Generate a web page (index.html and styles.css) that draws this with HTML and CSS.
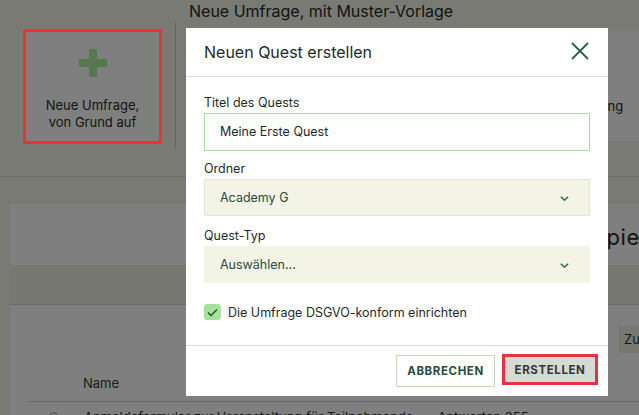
FILE: index.html
```html
<!DOCTYPE html>
<html lang="de">
<head>
<meta charset="utf-8">
<title>Neuen Quest erstellen</title>
<link rel="stylesheet" href="styles.css">
</head>
<body>
<div class="page">
  <section class="creator">
    <div class="creator-col creator-col--blank">
      <button class="create-card" type="button">
        <svg class="create-card__plus" width="28" height="28" viewBox="0 0 28 28" aria-hidden="true">
          <rect x="10" y="0" width="8" height="28" fill="#a6f29a"/>
          <rect x="0" y="10" width="28" height="8" fill="#a6f29a"/>
        </svg>
        <span class="create-card__label">Neue Umfrage,<br>von Grund auf</span>
      </button>
    </div>
    <div class="creator-sep"></div>
    <div class="creator-col creator-col--templates">
      <h2 class="creator-title">Neue Umfrage, mit Muster-Vorlage</h2>
      <div class="template-row">
        <div class="template-card"><span>Mitarbeiterbefragung</span></div>
        <div class="template-card"><span>Kundenzufriedenheit</span></div>
        <div class="template-card template-card--wide"><span>Veranstaltung</span></div>
      </div>
    </div>
  </section>

  <section class="quests">
    <h2 class="quests-title">Meine Quests und Beispiele</h2>
    <div class="quests-toolbar"></div>
    <div class="quests-actions">
      <span class="quests-reset">Zurücksetzen</span>
    </div>
    <div class="quests-table">
      <div class="quests-head"><span class="col-name">Name</span></div>
      <div class="quests-row">
        <span class="row-icon">&#9737;</span>
        <span class="row-name">Anmeldeformular zur Veranstaltung für Teilnehmende</span>
        <span class="row-count">Antworten 255</span>
      </div>
    </div>
  </section>
</div>

<div class="backdrop"></div>
<div class="hint hint--card"></div>

<div class="modal" role="dialog" aria-labelledby="modal-title">
  <header class="modal-head">
    <h1 id="modal-title" class="modal-title">Neuen Quest erstellen</h1>
    <button class="modal-close" type="button" aria-label="Schließen">
      <svg width="18" height="18" viewBox="0 0 18 18" aria-hidden="true">
        <path d="M1 1 L17 17 M17 1 L1 17" stroke="#2d5d4f" stroke-width="1.8" fill="none"/>
      </svg>
    </button>
  </header>
  <div class="modal-body">
    <label class="field-label" for="q-title">Titel des Quests</label>
    <div class="field-input" id="q-title">Meine Erste Quest</div>

    <label class="field-label">Ordner</label>
    <div class="field-select field-select--bordered">
      <span>Academy G</span>
      <svg class="chevron" width="9" height="5" viewBox="0 0 9 5" aria-hidden="true"><path d="M0.8 0.8 L4.5 4.2 L8.2 0.8" stroke="#2d5d4f" stroke-width="1.4" fill="none"/></svg>
    </div>

    <label class="field-label">Quest-Typ</label>
    <div class="field-select">
      <span>Auswählen...</span>
      <svg class="chevron" width="9" height="5" viewBox="0 0 9 5" aria-hidden="true"><path d="M0.8 0.8 L4.5 4.2 L8.2 0.8" stroke="#2d5d4f" stroke-width="1.4" fill="none"/></svg>
    </div>

    <div class="check-row">
      <span class="check-box">
        <svg width="11" height="9" viewBox="0 0 11 9" aria-hidden="true"><path d="M1 4.5 L4 7.5 L10 1.5" stroke="#2c4a3b" stroke-width="1.4" fill="none"/></svg>
      </span>
      <span class="check-label">Die Umfrage DSGVO-konform einrichten</span>
    </div>
  </div>
  <footer class="modal-foot">
    <button class="btn btn--outline" type="button">ABBRECHEN</button>
    <button class="btn btn--primary btn--hint" type="button">ERSTELLEN</button>
  </footer>
</div>
</body>
</html>
```

FILE: styles.css
```css
* { box-sizing: border-box; }

html, body {
  margin: 0;
  padding: 0;
  height: 100%;
  overflow: hidden;
}

body {
  background: #f4f4e9;
  font-family: "Inter", "Noto Sans", sans-serif;
  color: #1e2b2a;
}

/* ---------- page behind the dialog ---------- */

.page { width: 100%; }

.creator {
  display: flex;
  align-items: flex-start;
  height: 177px;
  padding-left: 24px;
  border-bottom: 1px solid #dcdcd4;
}

.creator-col--blank { padding-top: 30px; }

.create-card {
  width: 137px;
  height: 113px;
  background: #fff;
  border: 0;
  padding: 0;
  display: flex;
  flex-direction: column;
  align-items: center;
  font-family: inherit;
}

.create-card__plus { margin-top: 19px; }

.create-card__label {
  margin-top: 20px;
  font-size: 13px;
  line-height: 17px;
  color: #1e2b2a;
  text-align: center;
}

.creator-sep {
  width: 1px;
  height: 126px;
  margin: 22px 13px 0 14px;
  background: #c8c8c0;
}

.creator-col--templates { flex: 1; min-width: 0; }

.creator-title {
  margin: 0;
  font-size: 16px;
  font-weight: 400;
  line-height: 22px;
  color: #1e2b2a;
}

.template-row {
  display: flex;
  gap: 14px;
  margin-top: 9px;
}

.template-card {
  flex: 0 0 auto;
  width: 137px;
  height: 110px;
  background: #fff;
  display: flex;
  align-items: center;
  justify-content: center;
  font-size: 13px;
}

.template-card--wide {
  width: 200px;
  justify-content: flex-start;
  padding-left: 47px;
  padding-top: 39px;
}

.quests {
  margin: 27px 0 0 10px;
  background: #fff;
  height: 260px;
}

.quests-title {
  margin: 0;
  padding: 19px 0 0 345px;
  font-size: 22px;
  font-weight: 400;
  letter-spacing: 0.6px;
  line-height: 28px;
  height: 61px;
  white-space: nowrap;
}

.quests-toolbar {
  height: 40px;
  background: #f0f0e6;
  border-bottom: 1px solid #d8d8cf;
}

.quests-actions {
  display: flex;
  justify-content: flex-end;
  padding-top: 21px;
  height: 70px;
}

.quests-reset {
  display: block;
  margin-right: -90px;
  width: 110px;
  height: 27px;
  background: #f0f0e6;
  font-size: 13px;
  line-height: 27px;
  padding-left: 5px;
}

.quests-table { padding-left: 18px; }

.quests-head {
  height: 27px;
  border-bottom: 1px solid #cfcfc6;
  font-size: 13px;
  line-height: 16px;
  color: #3b3b3b;
}

.col-name { display: block; padding-left: 55px; }

.quests-row {
  display: flex;
  gap: 24px;
  padding: 7px 0 0 20px;
  font-size: 13px;
  white-space: nowrap;
}

/* ---------- dialog layer ---------- */

.backdrop {
  position: fixed;
  inset: 0;
  background: rgba(0, 0, 0, 0.5);
}

.hint {
  position: absolute;
  border: 3px solid #e9323f;
  border-radius: 1px;
}

.hint--card {
  left: 23px;
  top: 29px;
  width: 139px;
  height: 115px;
}

.modal {
  position: fixed;
  left: 186px;
  top: 28px;
  width: 422px;
  height: 368px;
  background: #fff;
  display: flex;
  flex-direction: column;
}

.modal-head {
  height: 49px;
  flex: 0 0 49px;
  border-bottom: 1px solid #dedede;
  display: flex;
  align-items: center;
  justify-content: space-between;
  padding: 0 19px 0 18px;
}

.modal-title {
  margin: 0;
  font-size: 16px;
  font-weight: 400;
  color: #1e2b2a;
}

.modal-close {
  border: 0;
  background: none;
  padding: 0;
  display: flex;
  margin-top: -3px;
}

.modal-body {
  padding: 18px 18px 0;
  flex: 1;
  display: flex;
  flex-direction: column;
}

.field-label {
  display: block;
  font-size: 12.5px;
  line-height: 16px;
  margin-bottom: 2px;
  color: #1e2b2a;
}

.field-input {
  height: 38px;
  border: 1px solid #a9dd9f;
  padding-left: 15px;
  font-size: 12.5px;
  line-height: 36px;
  color: #1e2b2a;
  margin-bottom: 10px;
}

.field-select {
  height: 37px;
  background: #f4f4e6;
  border: 1px solid #f4f4e6;
  display: flex;
  align-items: center;
  justify-content: space-between;
  padding: 0 20px 0 15px;
  font-size: 12.5px;
  color: #234c3e;
  margin-bottom: 12px;
}

.field-select--bordered { border-color: #e3e3d7; }

.chevron { margin-top: 1px; }

.check-row {
  display: flex;
  align-items: center;
  gap: 7px;
  margin-top: 9px;
}

.check-box {
  width: 17px;
  height: 16px;
  border-radius: 3px;
  background: #a6e29b;
  display: flex;
  align-items: center;
  justify-content: center;
}

.check-label {
  font-size: 12.5px;
  color: #1e2b2a;
}

.modal-foot {
  height: 51px;
  flex: 0 0 51px;
  border-top: 1px solid #dedede;
  display: flex;
  justify-content: flex-end;
  align-items: center;
  gap: 8px;
  padding: 0 11px 0 0;
}

.btn {
  font-family: inherit;
  font-size: 11.5px;
  font-weight: 700;
  letter-spacing: 0.6px;
  cursor: pointer;
}

.btn--outline {
  width: 99px;
  height: 32px;
  background: #fff;
  border: 1px solid #c7d7b9;
  color: #2a4c40;
}

.btn--primary {
  width: 94px;
  height: 29px;
  background: #d6dad5;
  border: 0;
  color: #303b37;
  margin-top: -3px;
}

.btn--hint {
  outline: 3px solid #e9323f;
  outline-offset: -2px;
}
```
